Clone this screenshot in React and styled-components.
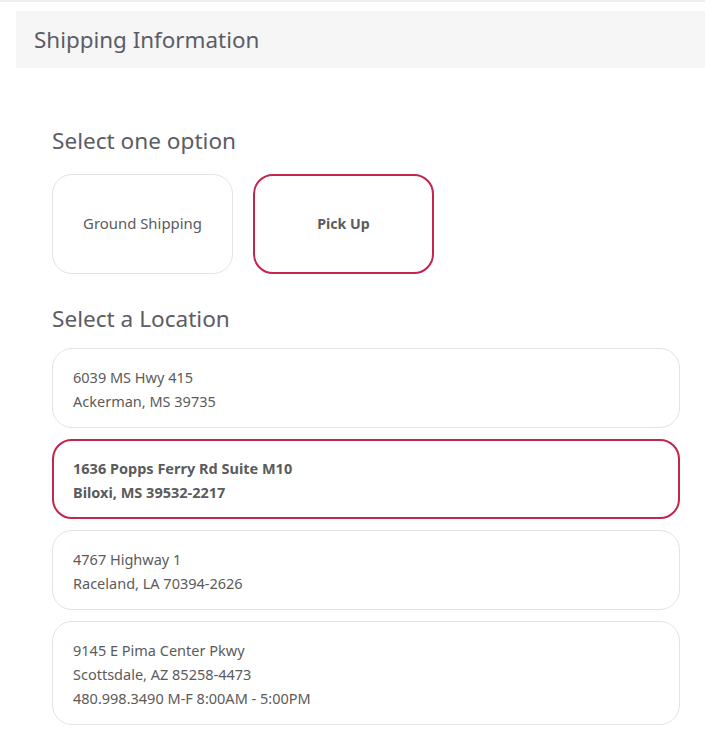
import React, { useState } from "react";
import styled, { createGlobalStyle } from "styled-components";

const Global = createGlobalStyle`
  html, body { margin: 0; padding: 0; background: #fff; }
  body { font-family: "Source Sans Pro", "Noto Sans", "Open Sans", sans-serif; color: #5b5b5b; }
  * { box-sizing: border-box; }
`;

const Page = styled.div`
  border-top: 2px solid #eeeeee;
  padding-top: 9px;
  padding-left: 16px;
`;

const Header = styled.div`
  background: #f6f6f6;
  height: 57px;
  display: flex;
  align-items: center;
  padding-left: 18px;
  font-size: 22.4px;
  color: #5c5c66;
`;

const Body = styled.div`
  padding: 58px 25px 0 36px;
`;

const SectionTitle = styled.h2`
  margin: 0 0 ${(p) => p.$gap || 18}px;
  font-weight: 400;
  font-size: 22.6px;
  line-height: 30px;
  color: #5c5c62;
`;

const Options = styled.div`
  display: flex;
  gap: 20px;
  margin-bottom: 30px;
`;

const Option = styled.button`
  width: 181px;
  height: 100px;
  padding: 0 0 2px;
  border-radius: 20px;
  background: #fff;
  font-family: inherit;
  font-size: ${(p) => (p.$active ? 14.2 : 14.9)}px;
  color: #5b5b5b;
  font-weight: ${(p) => (p.$active ? 700 : 400)};
  border: ${(p) => (p.$active ? "2px solid #c2254d" : "1px solid #e3e3e3")};
  cursor: pointer;
`;

const List = styled.div`
  display: flex;
  flex-direction: column;
  gap: 11px;
`;

const Card = styled.div`
  border-radius: 20px;
  border: ${(p) => (p.$active ? "2px solid #c2254d" : "1px solid #e3e3e3")};
  padding: ${(p) => (p.$active ? "15px 19px 13px" : "16px 20px 14px")};
  font-size: 14.5px;
  line-height: 24px;
  font-weight: ${(p) => (p.$active ? 700 : 400)};
  color: #5b5b5b;
  cursor: pointer;
`;

const locations = [
  ["6039 MS Hwy 415", "Ackerman, MS 39735"],
  ["1636 Popps Ferry Rd Suite M10", "Biloxi, MS 39532-2217"],
  ["4767 Highway 1", "Raceland, LA 70394-2626"],
  ["9145 E Pima Center Pkwy", "Scottsdale, AZ 85258-4473", "480.998.3490 M-F 8:00AM - 5:00PM"],
];

export default function App() {
  const [opt, setOpt] = useState(1);
  const [loc, setLoc] = useState(1);
  return (
    <>
      <Global />
      <Page>
        <Header>Shipping Information</Header>
        <Body>
          <SectionTitle>Select one option</SectionTitle>
          <Options>
            <Option $active={opt === 0} onClick={() => setOpt(0)}>Ground Shipping</Option>
            <Option $active={opt === 1} onClick={() => setOpt(1)}>Pick Up</Option>
          </Options>
          <SectionTitle $gap={14}>Select a Location</SectionTitle>
          <List>
            {locations.map((l, i) => (
              <Card key={i} $active={loc === i} onClick={() => setLoc(i)}>
                {l.map((line, j) => (
                  <div key={j}>{line}</div>
                ))}
              </Card>
            ))}
          </List>
        </Body>
      </Page>
    </>
  );
}
